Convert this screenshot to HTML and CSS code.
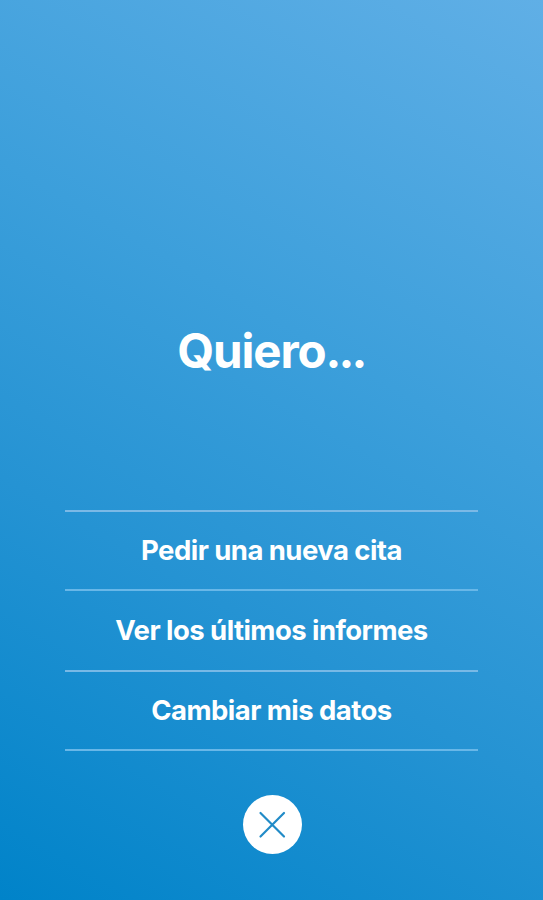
FILE: index.html
```html
<!DOCTYPE html>
<html lang="es">
<head>
<meta charset="utf-8">
<title>Quiero...</title>
<link rel="stylesheet" href="styles.css">
</head>
<body>
<main class="screen">
<h1 class="title">Quiero<span class="dots">...</span></h1>
<nav class="menu">
<a class="item"><span class="label">Pedir una nueva cita</span></a>
<a class="item"><span class="label">Ver los últimos informes</span></a>
<a class="item"><span class="label">Cambiar mis datos</span></a>
</nav>
<button class="close" aria-label="Cerrar">
<svg viewBox="0 0 59 59" width="59" height="59"><path d="M17.5 18 41 41.5M41 18 17.5 41.5"/></svg>
</button>
</main>
</body>
</html>
```

FILE: styles.css
```css
* { box-sizing: border-box; }
body { margin: 0; }
.screen {
  height: 900px;
  display: flex;
  flex-direction: column;
  align-items: center;
  overflow: hidden;
  font-family: Inter, "Liberation Sans", sans-serif;
  color: #fff;
  background: linear-gradient(210deg, #60afe6 0%, #3c9fdb 39%, #2593d3 65%, #0083c9 100%);
}
.title {
  margin: 320px 0 0;
  height: 61px;
  line-height: 61px;
  font-size: 47.5px;
  font-weight: 700;
  letter-spacing: -1.15px;
  text-indent: -1px;
  white-space: nowrap;
}
.dots { letter-spacing: -2.8px; }
.menu {
  width: 413px;
  margin-top: 129px;
  border-top: 2px solid #7bb9e6;
}
.item {
  display: flex;
  justify-content: center;
  align-items: center;
  height: 80px;
  padding-bottom: 2px;
  border-bottom: 2px solid #68b7e8;
}
.item:first-child { height: 79px; }
.item:nth-child(2) { height: 81px; border-color: #78b9e6; }
.item:last-child { height: 79px; }
.label {
  font-size: 27.5px;
  font-weight: 700;
  line-height: 36px;
  letter-spacing: -0.55px;
  white-space: nowrap;
}
.close {
  width: 59px;
  height: 59px;
  margin: 44px 0 0 1px;
  padding: 0;
  border: 0;
  border-radius: 50%;
  background: #fff;
}
.close svg { display: block; }
.close path { fill: none; stroke: #218bc7; stroke-width: 2.2; stroke-linecap: round; }
```
